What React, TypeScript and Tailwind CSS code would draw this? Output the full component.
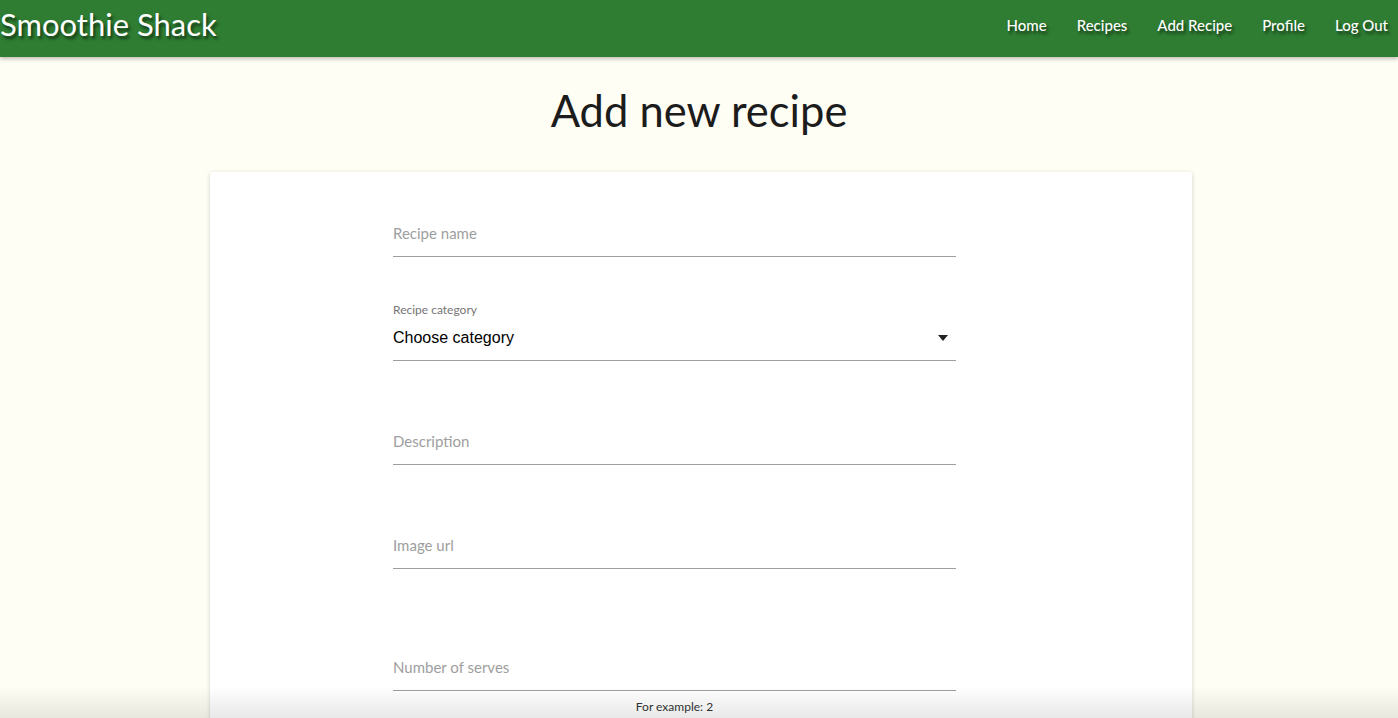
import React from 'react';

const links = ['Home', 'Recipes', 'Add Recipe', 'Profile', 'Log Out'];

const Field = ({ label, helper }: { label: string; helper?: string }) => (
  <div className="flex flex-col">
    <div className="h-[45px] flex items-center border-b border-[#9e9e9e] text-[15px] text-[#9e9e9e]">
      {label}
    </div>
    {helper && <p className="text-[12px] text-[#333] text-center mt-[7px]">{helper}</p>}
  </div>
);

export default function App() {
  return (
    <div className="relative min-h-screen h-[718px] overflow-hidden bg-[#fefef4] font-['Lato','Noto_Sans',sans-serif]">
      {/* Navbar */}
      <nav className="relative z-10 h-[57px] flex items-center justify-between bg-[#2e7d32] shadow-[0_2px_4px_rgba(0,0,0,0.25)]">
        <a className="text-white text-[31px] leading-none -mt-[8px] [text-shadow:2px_3px_3px_rgba(0,0,0,0.55)]">
          Smoothie Shack
        </a>
        <ul className="flex items-center gap-[30px] pr-[10px] -mt-[7px]">
          {links.map((l) => (
            <li key={l} className="text-white text-[15px] font-medium [text-shadow:2px_3px_3px_rgba(0,0,0,0.55)]">
              {l}
            </li>
          ))}
        </ul>
      </nav>

      {/* Heading */}
      <h1 className="text-center text-[43.5px] leading-none text-[#1c1c1c] mt-[32px]">Add new recipe</h1>

      {/* Card */}
      <div className="mt-[39px] ml-[210px] w-[982px] bg-white rounded-[2px] shadow-[0_1px_4px_rgba(0,0,0,0.18)] pl-[183px] pt-[40px] pb-[40px]">
        <div className="w-[563px] flex flex-col">
          <Field label="Recipe name" />

          <div className="mt-[47px] flex flex-col">
            <span className="text-[12px] text-[#757575] leading-none">Recipe category</span>
            <div className="h-[43px] mt-[2px] pt-[8px] flex items-start justify-between border-b border-[#9e9e9e] font-['Liberation_Sans',Arial,sans-serif] text-[16px] text-black">
              <span>Choose category</span>
              <svg width="10" height="6" viewBox="0 0 10 6" className="mr-[8px] mt-[9px]">
                <path d="M0 0h10L5 6z" fill="#222" />
              </svg>
            </div>
          </div>

          <div className="mt-[59px]">
            <Field label="Description" />
          </div>
          <div className="mt-[59px]">
            <Field label="Image url" />
          </div>
          <div className="mt-[77px]">
            <Field label="Number of serves" helper="For example: 2" />
          </div>
        </div>
      </div>

      {/* Bottom fade */}
      <div className="pointer-events-none absolute left-0 right-0 bottom-0 h-[32px] bg-gradient-to-b from-transparent to-[rgba(0,0,0,0.09)]" />
    </div>
  );
}
